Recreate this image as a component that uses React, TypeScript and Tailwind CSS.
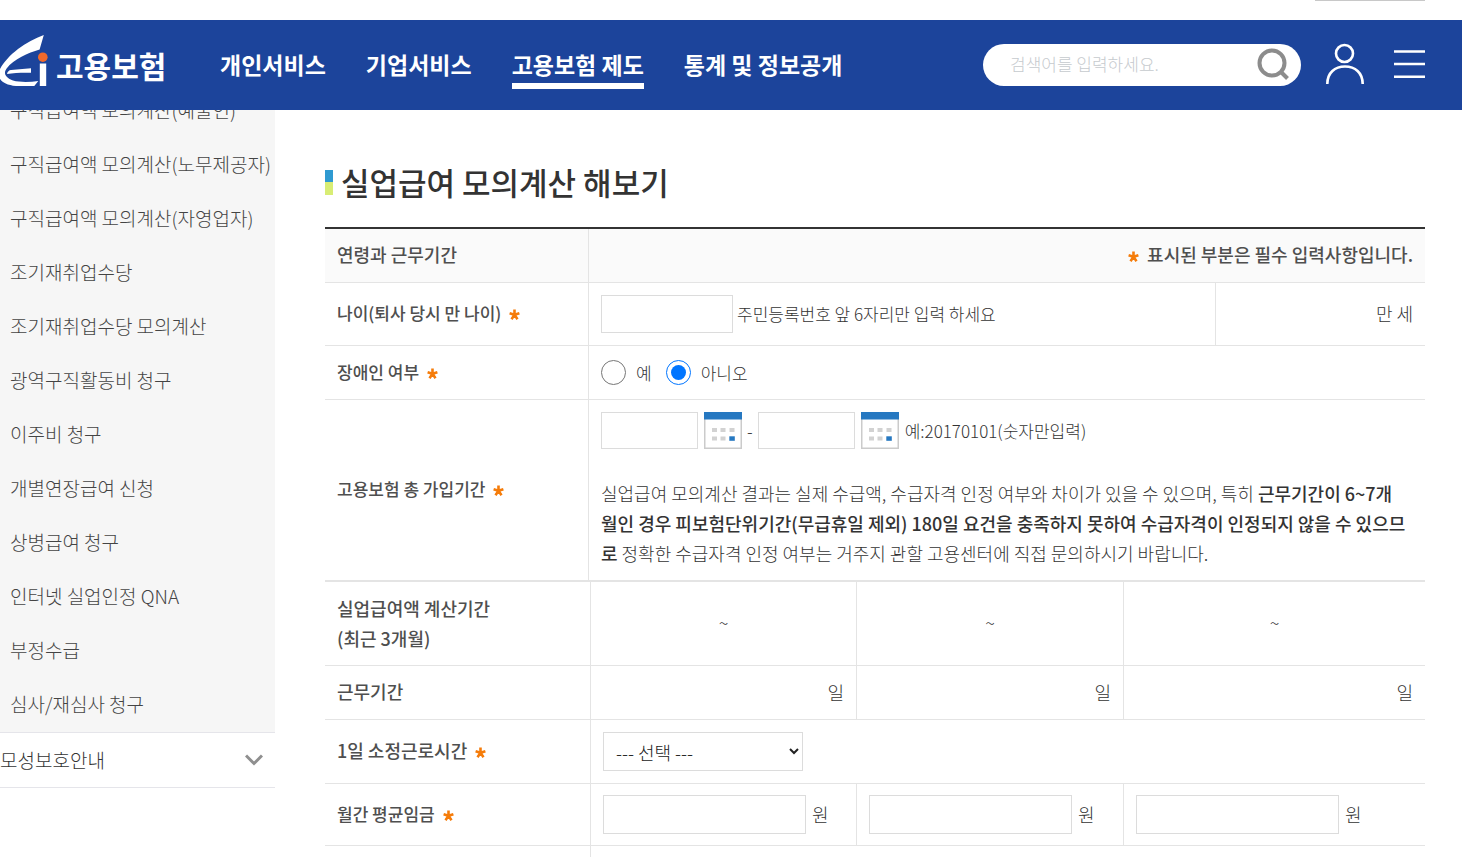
import type { ReactNode } from "react";

const NAV = ["개인서비스", "기업서비스", "고용보험 제도", "통계 및 정보공개"];
const CURRENT = "고용보험 제도";

const SIDE = [
  "구직급여액 모의계산(예술인)",
  "구직급여액 모의계산(노무제공자)",
  "구직급여액 모의계산(자영업자)",
  "조기재취업수당",
  "조기재취업수당 모의계산",
  "광역구직활동비 청구",
  "이주비 청구",
  "개별연장급여 신청",
  "상병급여 청구",
  "인터넷 실업인정 QNA",
  "부정수급",
  "심사/재심사 청구",
];

function Logo() {
  return (
    <a href="#" className="flex h-[60px] w-[166px] shrink-0 items-center gap-2 overflow-hidden text-white">
      <svg width="48" height="52" viewBox="0 0 48 52" className="shrink-0 self-start" aria-hidden="true">
        <path
          d="M43.8 0 L39.6 14.5 C28 18 14 24 6.6 33.5 C3 38.5 5.5 43 13 45.5 C20 47.5 30 47.2 38.3 46 L34.3 51 H16 C6 50 0 46.5 -1 41 V36 C2 29 9 21 18 14 C26 8 35 3.5 43.8 0Z"
          fill="#fff"
        />
        <path d="M7 39 C7.6 36.5 9 35.2 11 35 L31 33.2 V37.8 C22 37.6 14 37.9 7 39Z" fill="#fff" />
        <rect x="39.8" y="28.5" width="6.4" height="22.5" fill="#fff" />
        <circle cx="42.8" cy="22.2" r="4.8" fill="#f0692b" />
      </svg>
      <span className="text-[30px] leading-[40px] font-bold whitespace-nowrap">고용보험</span>
    </a>
  );
}

function Header() {
  return (
    <header className="relative z-10 flex h-[90px] shrink-0 items-center bg-[#1c449b] pr-[37px]">
      <Logo />
      <nav className="mt-[6px] ml-[54px] flex gap-10">
        {NAV.map((n) => (
          <a
            key={n}
            href="#"
            className={
              n === CURRENT
                ? "border-b-6 border-white pb-[2px] text-[23px] leading-[34px] font-bold whitespace-nowrap text-white"
                : "border-b-6 border-transparent pb-[2px] text-[23px] leading-[34px] font-bold whitespace-nowrap text-white"
            }
          >
            {n}
          </a>
        ))}
      </nav>
      <form className="ml-auto flex h-[42px] w-[318px] items-center rounded-full bg-white pr-3 pb-[2px] pl-[27px]">
        <input
          type="text"
          aria-label="검색어"
          placeholder="검색어를 입력하세요."
          className="min-w-0 flex-1 text-[17px] font-light text-gray-700 outline-none placeholder:text-[#c6cace]"
        />
        <button type="button" aria-label="검색">
          <svg width="32" height="32" viewBox="0 0 32 32" fill="none" stroke="#8c8c8c" strokeWidth="4">
            <circle cx="15" cy="15" r="12.5" />
            <path d="M23.5 23.5 L30.5 30.5" />
          </svg>
        </button>
      </form>
      <button type="button" aria-label="로그인" className="mb-[2px] ml-[25px]">
        <svg width="38" height="42" viewBox="0 0 38 42" fill="none" stroke="#fff" strokeWidth="2.6">
          <circle cx="18.5" cy="10.5" r="8.5" />
          <path d="M1.3 41 C1.3 29.5 9 23.500 19 23.5 C29 23.5 36.7 29.5 36.7 41" />
        </svg>
      </button>
      <button type="button" aria-label="전체메뉴" className="mb-[2px] ml-[30px]">
        <svg width="31" height="30" viewBox="0 0 31 30" stroke="#fff" strokeWidth="2.5">
          <path d="M0 2.5 H31 M0 15 H31 M0 27.7 H31" />
        </svg>
      </button>
    </header>
  );
}

function Sidebar() {
  return (
    <aside className="w-[275px] shrink-0 text-[19px] font-light whitespace-nowrap">
      <ul className="-mt-[27px] bg-[#f6f6f6] pb-px text-[#444]">
        {SIDE.map((s) => (
          <li key={s}>
            <a href="#" className="block pl-[10px] leading-[54px]">
              {s}
            </a>
          </li>
        ))}
      </ul>
      <a
        href="#"
        className="flex items-center justify-between border-y border-[#e5e5ea] pr-3 leading-[54px] text-[#333]"
      >
        모성보호안내
        <svg width="18" height="12" viewBox="0 0 18 12" fill="none" stroke="#8f8f8f" strokeWidth="3">
          <path d="M1 1.5 L9 9.5 L17 1.5" />
        </svg>
      </a>
    </aside>
  );
}

function Star() {
  return (
    <svg
      width="11"
      height="11"
      viewBox="0 0 11 11"
      role="img"
      aria-label="필수"
      className="mt-[3px] shrink-0"
      stroke="#f57c0a"
      strokeWidth="2.6"
    >
      <path d="M5.5 5.8 V0.5 M5.5 5.8 L0.6 4.2 M5.5 5.8 L10.4 4.2 M5.5 5.8 L2.5 10.2 M5.5 5.8 L8.5 10.2" />
    </svg>
  );
}

function Calendar() {
  return (
    <button type="button" aria-label="달력" className="shrink-0">
      <svg width="38" height="37" viewBox="0 0 38 37">
        <rect x="0.75" y="0.75" width="36.5" height="35.5" fill="#fff" stroke="#cbcbcb" strokeWidth="1.5" />
        <rect width="38" height="7.5" fill="#2678c1" />
        <g fill="#d2d2d2">
          <rect x="8" y="16" width="5" height="4" />
          <rect x="16.5" y="16" width="5" height="4" />
          <rect x="25.5" y="16" width="5" height="4" />
          <rect x="8" y="24.5" width="5" height="4" />
          <rect x="16.5" y="24.5" width="5" height="4" />
        </g>
        <rect x="25.3" y="24.3" width="5.5" height="4.5" fill="#2678c1" />
      </svg>
    </button>
  );
}

const TH = "border-r border-b border-[#e4e4e4] px-3 pb-[2px] text-left font-medium text-[#4f4f4f]";
const TD = "border-b border-[#e4e4e4] px-3 font-light";
const BOX = "border border-[#dcdcdc] bg-white px-2 outline-none";

function Label({ children, htmlFor }: { children: ReactNode; htmlFor?: string }) {
  return (
    <label htmlFor={htmlFor} className="flex items-center gap-2">
      {children}
      <Star />
    </label>
  );
}

function AgeTable() {
  return (
    <table className="w-full table-fixed border-separate border-spacing-0 border-t-2 border-[#333]">
      <colgroup>
        <col className="w-[264px]" />
        <col />
        <col className="w-[210px]" />
      </colgroup>
      <tbody>
        <tr className="h-[54px] bg-[#fafafa]">
          <th scope="row" className={TH}>
            연령과 근무기간
          </th>
          <td colSpan={2} className="border-b border-[#e4e4e4] px-3 pb-[2px] font-medium text-[#4f4f4f]">
            <div className="flex items-center justify-end gap-2">
              <Star />
              표시된 부분은 필수 입력사항입니다.
            </div>
          </td>
        </tr>
        <tr className="h-[63px] text-[17px]">
          <th scope="row" className={TH}>
            <Label htmlFor="age">나이(퇴사 당시 만 나이)</Label>
          </th>
          <td className={TD}>
            <div className="flex items-center gap-1">
              <input id="age" type="text" className={BOX + " h-[38px] w-[132px]"} />
              주민등록번호 앞 6자리만 입력 하세요
            </div>
          </td>
          <td className={TD + " border-l pb-[2px] text-right text-[18px]"}>만 세</td>
        </tr>
        <tr className="h-[54px] text-[17px]">
          <th scope="row" className={TH}>
            <Label>장애인 여부</Label>
          </th>
          <td colSpan={2} className={TD}>
            <div className="flex items-center gap-[14px]">
              <label className="flex items-center gap-[10px]">
                <input type="radio" name="disabled" className="m-0 size-[25px]" />예
              </label>
              <label className="flex items-center gap-[10px]">
                <input type="radio" name="disabled" defaultChecked className="m-0 size-[25px]" />
                아니오
              </label>
            </div>
          </td>
        </tr>
        <tr>
          <th scope="row" className={TH + " text-[17px]"}>
            <Label htmlFor="from">고용보험 총 가입기간</Label>
          </th>
          <td colSpan={2} className={TD + " py-3"}>
            <div className="flex items-center gap-[6px] text-[17px]">
              <input id="from" type="text" className={BOX + " h-[37px] w-[97px]"} />
              <Calendar />
              <span className="-mx-px">-</span>
              <input type="text" aria-label="가입기간 종료일" className={BOX + " h-[37px] w-[97px]"} />
              <Calendar />
              예:20170101(숫자만입력)
            </div>
            <p className="mt-[29px] leading-[30px] break-all">
              실업급여 모의계산 결과는 실제 수급액, 수급자격 인정 여부와 차이가 있을 수 있으며, 특히{" "}
              <strong className="font-medium">
                근무기간이 6~7개
                <br />
                월인 경우 피보험단위기간(무급휴일 제외) 180일 요건을 충족하지 못하여 수급자격이 인정되지 않을 수 있으므
                <br />로
              </strong>{" "}
              정확한 수급자격 인정 여부는 거주지 관할 고용센터에 직접 문의하시기 바랍니다.
            </p>
          </td>
        </tr>
      </tbody>
    </table>
  );
}

function WageTable() {
  return (
    <table className="w-full table-fixed border-separate border-spacing-0 border-t border-[#e4e4e4]">
      <colgroup>
        <col className="w-[266px]" />
        <col className="w-[266px]" />
        <col className="w-[267px]" />
        <col />
      </colgroup>
      <tbody>
        <tr className="h-[84px]">
          <th scope="row" className={TH + " leading-[30px]"}>
            실업급여액 계산기간
            <br />
            (최근 3개월)
          </th>
          <td className={TD + " border-r pb-[2px] text-center"}>~</td>
          <td className={TD + " border-r pb-[2px] text-center"}>~</td>
          <td className={TD + " pb-[2px] text-center"}>~</td>
        </tr>
        <tr className="h-[54px]">
          <th scope="row" className={TH}>
            근무기간
          </th>
          <td className={TD + " border-r text-right"}>일</td>
          <td className={TD + " border-r text-right"}>일</td>
          <td className={TD + " text-right"}>일</td>
        </tr>
        <tr className="h-[64px]">
          <th scope="row" className={TH}>
            <Label htmlFor="hours">1일 소정근로시간</Label>
          </th>
          <td colSpan={3} className={TD}>
            <select
              id="hours"
              className="block h-[39px] w-[200px] border border-[#dcdcdc] bg-white pr-[3px] pl-2 text-[18px] text-[#222]"
            >
              <option>--- 선택 ---</option>
            </select>
          </td>
        </tr>
        <tr className="h-[62px]">
          <th scope="row" className={TH + " text-[17px]"}>
            <Label htmlFor="wage1">월간 평균임금</Label>
          </th>
          {[1, 2, 3].map((i) => (
            <td key={i} className={i < 3 ? TD + " border-r" : TD}>
              <div className="flex items-center gap-[6px]">
                <input
                  id={"wage" + i}
                  type="text"
                  aria-label={"월간 평균임금 " + i}
                  className={BOX + " h-[39px] w-[203px]"}
                />
                원
              </div>
            </td>
          ))}
        </tr>
        <tr className="h-[62px]">
          <th className={TH}></th>
          <td colSpan={3} className={TD}></td>
        </tr>
      </tbody>
    </table>
  );
}

export default function App() {
  return (
    <div className="flex h-screen flex-col overflow-hidden bg-white font-['Noto_Sans_CJK_KR',sans-serif]">
      <div className="flex h-5 shrink-0 items-start justify-end pr-[37px]">
        <div className="h-px w-[110px] bg-[#c8c8c8]" />
      </div>
      <Header />
      <div className="flex items-start">
        <Sidebar />
        <main className="min-w-0 flex-1 pt-[52px] pr-[37px] pl-[50px] text-[18px] text-[#333]">
          <h1 className="mb-[25px] flex items-center gap-2 text-[31px] leading-[40px] font-medium text-[#333]">
            <span className="flex h-[25px] w-2 flex-col">
              <span className="flex-1 bg-[#2f9ad1]" />
              <span className="flex-1 bg-[#d8ed74]" />
            </span>
            실업급여 모의계산 해보기
          </h1>
          <AgeTable />
          <WageTable />
        </main>
      </div>
    </div>
  );
}
